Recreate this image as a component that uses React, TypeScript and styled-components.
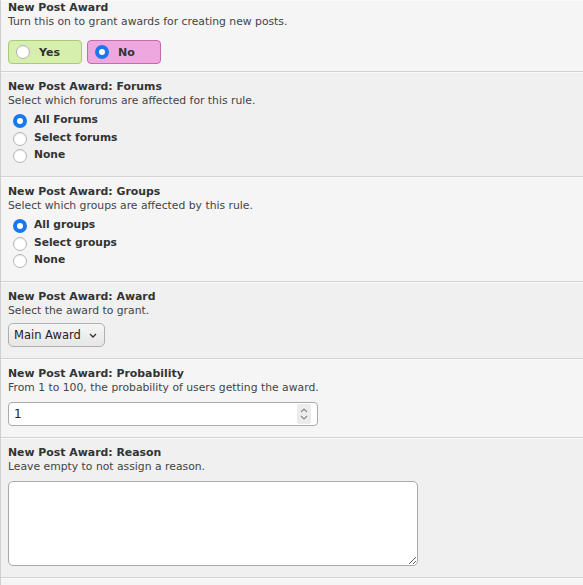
import { useState } from 'react';
import styled, { createGlobalStyle } from 'styled-components';

const GlobalStyle = createGlobalStyle`
  body {
    margin: 0;
    background: #f0f0f0;
    font-family: "DejaVu Sans", Verdana, sans-serif;
    color: #333;
  }
`;

type Choice = { value: string; label: string };

const forumChoices: Choice[] = [
  { value: 'all', label: 'All Forums' },
  { value: 'select', label: 'Select forums' },
  { value: 'none', label: 'None' },
];

const groupChoices: Choice[] = [
  { value: 'all', label: 'All groups' },
  { value: 'select', label: 'Select groups' },
  { value: 'none', label: 'None' },
];

const RadioList = ({ name, choices, value, onChange }: {
  name: string;
  choices: Choice[];
  value: string;
  onChange: (v: string) => void;
}) => (
  <List>
    {choices.map((c) => (
      <RadioLine key={c.value}>
        <RadioDot $checked={value === c.value} onClick={() => onChange(c.value)} />
        <input type="radio" name={name} hidden readOnly checked={value === c.value} />
        {c.label}
      </RadioLine>
    ))}
  </List>
);

export default function App() {
  const [enabled, setEnabled] = useState(false);
  const [forums, setForums] = useState('all');
  const [groups, setGroups] = useState('all');

  return (
    <>
      <GlobalStyle />
      <Table>
        <Row $alt $first>
          <Title>New Post Award</Title>
          <Desc>Turn this on to grant awards for creating new posts.</Desc>
          <Toggles>
            <ToggleBtn $kind="yes" onClick={() => setEnabled(true)}>
              <RadioDot $checked={enabled} />
              Yes
            </ToggleBtn>
            <ToggleBtn $kind="no" onClick={() => setEnabled(false)}>
              <RadioDot $checked={!enabled} />
              No
            </ToggleBtn>
          </Toggles>
        </Row>

        <Row>
          <Title>New Post Award: Forums</Title>
          <Desc>Select which forums are affected for this rule.</Desc>
          <RadioList name="forums" choices={forumChoices} value={forums} onChange={setForums} />
        </Row>

        <Row $alt>
          <Title>New Post Award: Groups</Title>
          <Desc>Select which groups are affected by this rule.</Desc>
          <RadioList name="groups" choices={groupChoices} value={groups} onChange={setGroups} />
        </Row>

        <Row>
          <Title>New Post Award: Award</Title>
          <Desc>Select the award to grant.</Desc>
          <SelectBox>
            Main Award
            <Chevron viewBox="0 0 8 5">
              <path d="M1 1l3 3 3-3" fill="none" stroke="#333" strokeWidth="1.3" />
            </Chevron>
          </SelectBox>
        </Row>

        <Row $alt>
          <Title>New Post Award: Probability</Title>
          <Desc>From 1 to 100, the probability of users getting the award.</Desc>
          <NumberBox>
            <NumberInput defaultValue="1" />
            <Spinner viewBox="0 0 14 20">
              <path d="M4 8l3-3 3 3M4 12l3 3 3-3" fill="none" stroke="#888" strokeWidth="1.1" />
            </Spinner>
          </NumberBox>
        </Row>

        <Row>
          <Title>New Post Award: Reason</Title>
          <Desc>Leave empty to not assign a reason.</Desc>
          <TextArea />
        </Row>

        <Row $alt $last />
      </Table>
    </>
  );
}

const Table = styled.div`
  border-left: 1px solid #cfcfcf;
  height: 585px;
  overflow: hidden;
  background: #f5f5f5;
`;

const Row = styled.div<{ $alt?: boolean; $first?: boolean; $last?: boolean }>`
  background: ${(p) => (p.$alt ? '#f5f5f5' : '#f0f0f0')};
  border-bottom: ${(p) => (p.$last ? 'none' : '1px solid #d2d2d2')};
  box-shadow: inset 0 1px 0 #fafafa;
  padding: ${(p) => (p.$last ? '0' : `${p.$first ? '1px' : '8px'} 8px 11px 7px`)};
  height: ${(p) => (p.$last ? '8px' : 'auto')};
  display: flex;
  flex-direction: column;
  align-items: flex-start;
`;

const Title = styled.div`
  font-size: 10.9px;
  font-weight: bold;
  line-height: 14px;
  color: #333;
`;

const Desc = styled.div`
  font-size: 10.8px;
  line-height: 13px;
  color: #444;
`;

const Toggles = styled.div`
  display: flex;
  gap: 5px;
  margin-top: 12px;
  margin-bottom: -4px;
`;

const ToggleBtn = styled.div<{ $kind: 'yes' | 'no' }>`
  display: flex;
  align-items: center;
  gap: 9px;
  box-sizing: border-box;
  width: 74px;
  height: 24px;
  padding-left: 7px;
  border-radius: 4px;
  font-size: 11px;
  font-weight: bold;
  color: #333;
  cursor: pointer;
  background: ${(p) => (p.$kind === 'yes' ? '#d6efad' : '#efa8df')};
  border: 1px solid ${(p) => (p.$kind === 'yes' ? '#a8c97c' : '#c86aab')};
`;

const RadioDot = styled.span<{ $checked: boolean }>`
  box-sizing: border-box;
  width: 14px;
  height: 14px;
  border-radius: 50%;
  flex-shrink: 0;
  background: #fff;
  border: ${(p) => (p.$checked ? '4px solid #1a78ee' : '1px solid #b5b5b5')};
  box-shadow: ${(p) => (p.$checked ? 'none' : 'inset 0 1px 1px rgba(0,0,0,0.08)')};
  cursor: pointer;
`;

const List = styled.div`
  display: flex;
  flex-direction: column;
  margin-top: 4px;
  margin-bottom: 1.5px;
  margin-left: 5px;
`;

const RadioLine = styled.label`
  display: flex;
  align-items: center;
  gap: 7px;
  height: 17.5px;
  font-size: 10.7px;
  font-weight: bold;
  color: #333;
  & > span {
    margin-top: 3px;
  }
`;

const SelectBox = styled.div`
  display: flex;
  align-items: center;
  gap: 8px;
  box-sizing: border-box;
  height: 24px;
  margin-top: 6px;
  padding: 0 7px 0 5px;
  border: 1px solid #b0b0b0;
  border-radius: 5px;
  background: linear-gradient(#f6f6f6, #e6e6e6);
  font-size: 11.5px;
  color: #222;
`;

const Chevron = styled.svg`
  width: 8px;
  height: 5px;
`;

const NumberBox = styled.div`
  display: flex;
  align-items: center;
  box-sizing: border-box;
  width: 310px;
  height: 24px;
  margin-top: 8px;
  padding: 0 6px 0 5px;
  background: #fff;
  border: 1px solid #aaa;
  border-radius: 4px;
`;

const NumberInput = styled.input`
  flex: 1;
  border: none;
  outline: none;
  padding: 0;
  font-family: "DejaVu Sans", Verdana, sans-serif;
  font-size: 12px;
  color: #222;
  background: transparent;
`;

const Spinner = styled.svg`
  width: 14px;
  height: 20px;
  background: #ececec;
  border-radius: 2px;
`;

const TextArea = styled.textarea`
  box-sizing: border-box;
  width: 410px;
  height: 85px;
  margin-top: 8px;
  border: 1px solid #aaa;
  border-radius: 5px;
  background: #fff;
  display: block;
`;
